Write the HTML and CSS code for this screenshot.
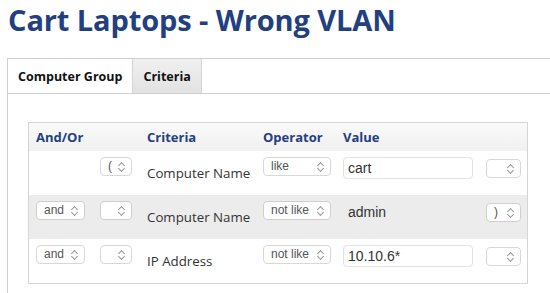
FILE: index.html
```html
<!DOCTYPE html>
<html lang="en">
<head>
    <meta charset="UTF-8">
    <title>Cart Laptops - Wrong VLAN</title>
    <link rel="stylesheet" href="styles.css">
</head>
<body>
    <h1 class="page-title">Cart Laptops - Wrong VLAN</h1>

    <div class="panel">
        <div class="tabs">
            <div class="tab">Computer Group</div>
            <div class="tab tab-gray">Criteria</div>
        </div>

        <div class="panel-body">
            <div class="criteria">
                <div class="row row-head">
                    <div class="cell">And/Or</div>
                    <div class="cell"></div>
                    <div class="cell">Criteria</div>
                    <div class="cell">Operator</div>
                    <div class="cell">Value</div>
                    <div class="cell"></div>
                </div>

                <div class="row">
                    <div class="cell"></div>
                    <div class="cell"><div class="select sel-paren">(<span class="arrows"></span></div></div>
                    <div class="cell cell-name">Computer Name</div>
                    <div class="cell"><div class="select sel-op">like<span class="arrows"></span></div></div>
                    <div class="cell"><div class="input">cart</div></div>
                    <div class="cell"><div class="select sel-paren sel-right"><span class="arrows"></span></div></div>
                </div>

                <div class="row row-gray">
                    <div class="cell"><div class="select sel-and">and<span class="arrows"></span></div></div>
                    <div class="cell"><div class="select sel-paren"><span class="arrows"></span></div></div>
                    <div class="cell cell-name">Computer Name</div>
                    <div class="cell"><div class="select sel-op">not like<span class="arrows"></span></div></div>
                    <div class="cell"><div class="input input-plain">admin</div></div>
                    <div class="cell"><div class="select sel-paren sel-right">)<span class="arrows"></span></div></div>
                </div>

                <div class="row">
                    <div class="cell"><div class="select sel-and">and<span class="arrows"></span></div></div>
                    <div class="cell"><div class="select sel-paren"><span class="arrows"></span></div></div>
                    <div class="cell cell-name">IP Address</div>
                    <div class="cell"><div class="select sel-op">not like<span class="arrows"></span></div></div>
                    <div class="cell"><div class="input">10.10.6*</div></div>
                    <div class="cell"><div class="select sel-paren sel-right"><span class="arrows"></span></div></div>
                </div>
            </div>
        </div>
    </div>
</body>
</html>
```

FILE: styles.css
```css
* {
    margin: 0;
    padding: 0;
    box-sizing: border-box;
}

html, body {
    height: 100%;
    overflow: hidden;
}

body {
    background: white;
    font-family: 'Open Sans', sans-serif;
    color: #333;
    padding: 0 0 0 7px;
}

.page-title {
    font-size: 29px;
    letter-spacing: -0.1px;
    font-weight: bold;
    color: #223f7f;
    line-height: 40px;
    padding-left: 1px;
    margin-bottom: 18px;
    white-space: nowrap;
}

/* panel runs off the right and bottom edges of the window */
.panel {
    height: 235px;
    border: 1px solid #cfcfcf;
    border-right: none;
    border-bottom: none;
}

.tabs {
    display: flex;
    height: 35px;
    border-bottom: 1px solid #cfcfcf;
}

.tab {
    display: flex;
    align-items: center;
    padding: 0 10px;
    font-size: 12.5px;
    font-weight: bold;
    color: #111;
    border-right: 1px solid #d4d4d4;
    white-space: nowrap;
}

.tab-gray {
    background: linear-gradient(#f0f0f0, #e2e2e2);
}

.panel-body {
    padding: 28px 0 0 20px;
}

.criteria {
    width: 500px;
    border: 1px solid #d4d4d4;
}

.row {
    display: grid;
    grid-template-columns: 64px 47px 116px 80px 143px 48px;
    height: 44px;
}

.row-head {
    height: 28px;
    background: linear-gradient(#fafafa, #f0f0f0);
}

.row-gray {
    background: #ececec;
}

.cell {
    padding: 6px 7px 0;
    white-space: nowrap;
}

.row-head .cell {
    padding: 0 7px;
    display: flex;
    align-items: center;
    font-size: 13px;
    font-weight: bold;
    color: #24407f;
}

.cell-name {
    display: flex;
    align-items: center;
    padding-top: 0;
    font-size: 13.3px;
    color: #333;
}

.select {
    position: relative;
    height: 19px;
    border: 1px solid #d8d8d8;
    border-radius: 4px;
    background: white;
    font-family: 'Liberation Sans', sans-serif;
    font-size: 12px;
    line-height: 17px;
    color: #555;
    padding-left: 7px;
}

.row-gray .select {
    border-color: #cfcfcf;
}

.sel-and {
    width: 49px;
}

.sel-paren {
    width: 32px;
}

.sel-right {
    width: 35px;
    margin-top: 2px;
}

.sel-op {
    width: 68px;
}

.arrows {
    position: absolute;
    right: 6px;
    top: 3px;
    width: 7px;
    height: 11px;
}

.arrows::before,
.arrows::after {
    content: '';
    position: absolute;
    left: 1px;
    width: 4px;
    height: 4px;
    border-left: 1px solid #999;
    border-top: 1px solid #999;
}

.arrows::before {
    top: 2px;
    transform: rotate(45deg);
}

.arrows::after {
    top: 5px;
    transform: rotate(225deg);
}

.input {
    width: 130px;
    height: 22px;
    border: 1px solid #e2e2e2;
    border-radius: 4px;
    background: white;
    font-family: 'Liberation Sans', sans-serif;
    font-size: 14px;
    line-height: 20px;
    color: #333;
    padding-left: 4px;
}

.input-plain {
    border-color: transparent;
    background: transparent;
}
```
